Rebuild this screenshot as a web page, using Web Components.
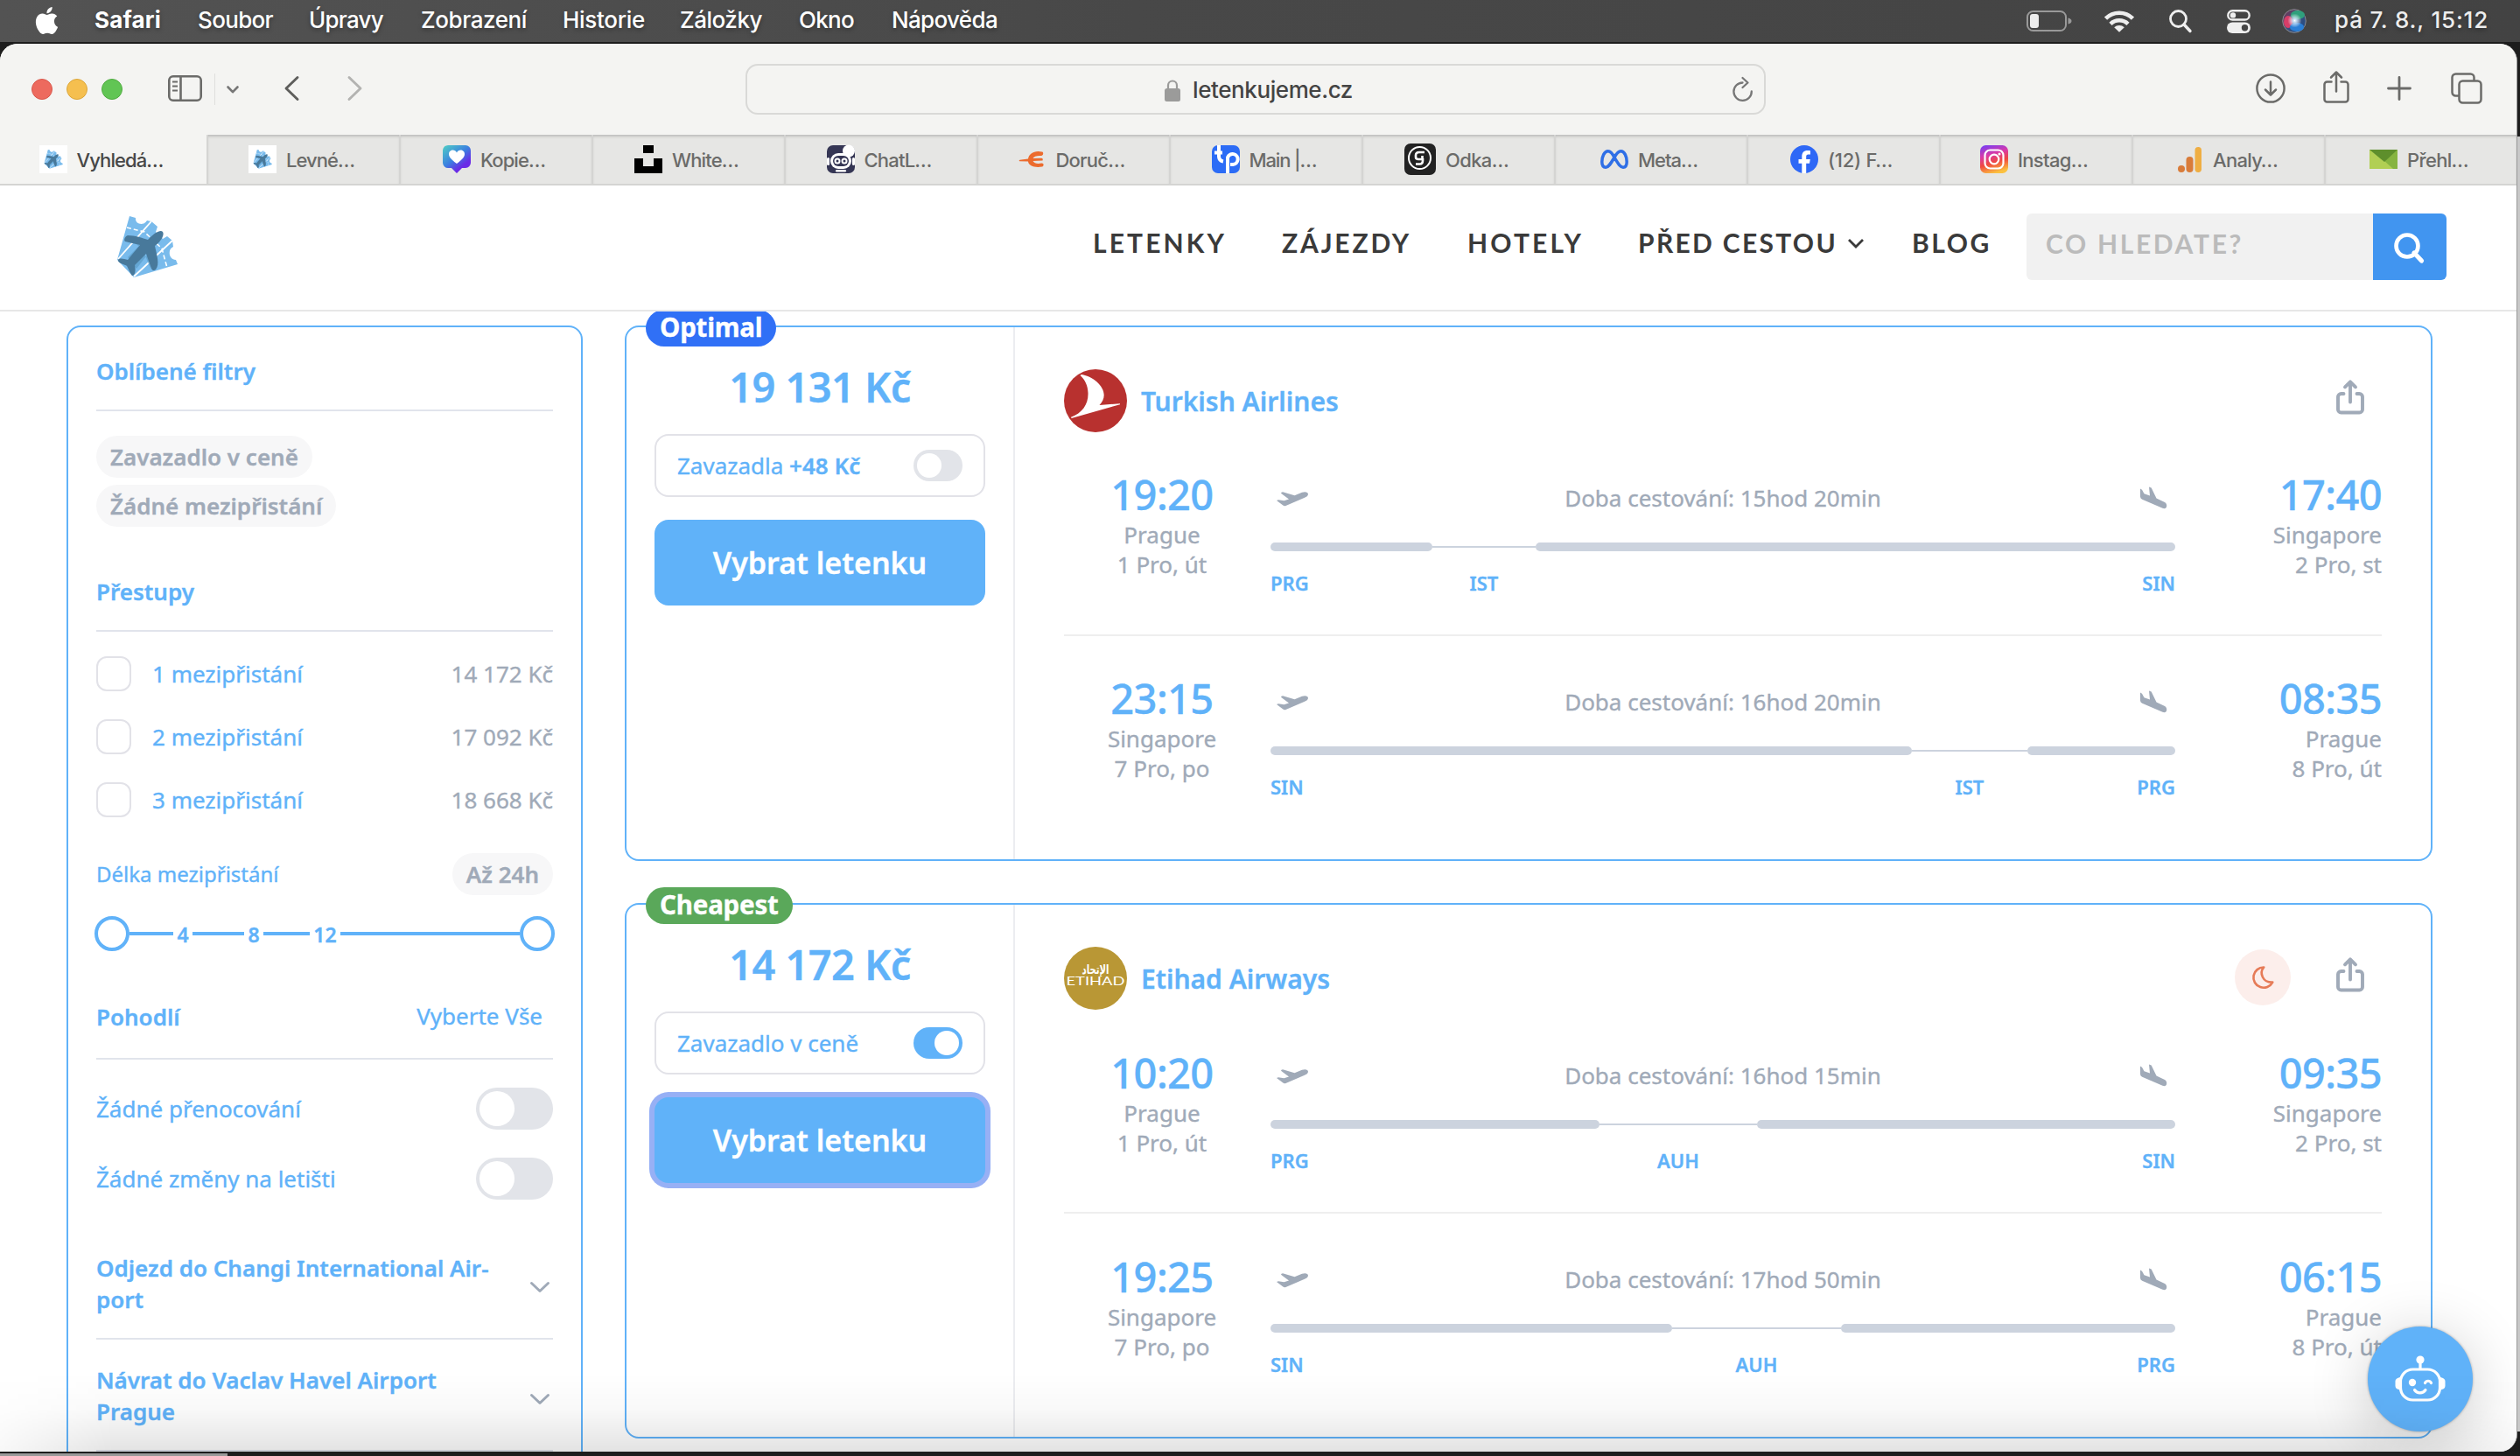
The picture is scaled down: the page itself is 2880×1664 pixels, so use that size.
<!DOCTYPE html>
<html lang="cs">
<head>
<meta charset="utf-8">
<title>letenkujeme.cz</title>
<style>
html,body{margin:0;padding:0;width:2880px;height:1664px;overflow:hidden;background:#1d1d1d}
</style>
</head>
<body>
<desktop-shell></desktop-shell>
<script>
const css = s => `<style>*{box-sizing:border-box}svg{display:block;flex:none;overflow:visible}${s}</style>`;
function define(name, render) {
  customElements.define(name, class extends HTMLElement {
    connectedCallback() {
      if (this.shadowRoot) return;
      this.attachShadow({ mode: 'open' });
      this.shadowRoot.innerHTML = render(this);
    }
  });
}
const at = (el, n, d = '') => el.getAttribute(n) ?? d;

/* One line of text tracked out to a given width */
customElements.define('fit-text', class extends HTMLElement {
  connectedCallback() {
    if (this.shadowRoot) return;
    this.attachShadow({ mode: 'open' }).innerHTML =
      css(':host{display:inline-block;white-space:pre;flex:none}span{display:inline-block}') + '<span><slot></slot></span>';
    const span = this.shadowRoot.querySelector('span');
    const w = +this.getAttribute('w');
    const natural = span.getBoundingClientRect().width;
    if (w && natural) {
      this.style.letterSpacing = ((w - natural) / this.textContent.length).toFixed(3) + 'px';
      this.style.width = w + 'px';
    }
  }
});

/* ---------- icons ---------- */
const LOGO = `<path fill="#79bbec" d="M14 0L21 2C20 9 30 12 34 5L39 6L46 12L44 18L52 26L57 23L63 28L64 35C57 38 59 50 67 50L69 55L19 70L0 50Z"/>
<g stroke="#fff" fill="none"><path stroke-width="1.8" d="M39 6L1 49M63 28L19 69"/><path stroke-width="1.6" stroke-dasharray="5 3" d="M11 13L31 18L51 37L57 59"/></g>
<path fill="#5b9cc9" d="M8 28L26 33L12 47L22 60L36 42L38 60L30 40L20 30Z" opacity=".7"/>
<path fill="#48799b" d="M52 18C54 21 51 28 43 34C45 44 49 55 44 61C42 63 40 62 39 60L33 43L20 56C21 61 21 66 18 68C16 69 12 58 11 57C9 55 0 54 1 50C3 47 8 49 12 50L26 33L9 29C7 27 9 23 12 22C20 22 29 25 35 27C43 18 50 15 52 18Z"/>`;
const ICONS = {
  apple: ['0 0 24 24', '<path fill="#fff" d="M12.152 6.896c-.948 0-2.415-1.078-3.96-1.04-2.04.027-3.91 1.183-4.961 3.014-2.117 3.675-.546 9.103 1.519 12.09 1.013 1.454 2.208 3.09 3.792 3.039 1.52-.065 2.09-.987 3.935-.987 1.831 0 2.35.987 3.96.948 1.637-.026 2.676-1.48 3.676-2.948 1.156-1.688 1.636-3.325 1.662-3.415-.039-.013-3.182-1.221-3.22-4.857-.026-3.04 2.48-4.494 2.597-4.559-1.429-2.09-3.623-2.324-4.39-2.376-2-.156-3.675 1.09-4.61 1.09zM15.53 3.83c.843-1.012 1.4-2.427 1.245-3.83-1.207.052-2.662.805-3.532 1.818-.78.896-1.454 2.338-1.273 3.714 1.338.104 2.715-.688 3.559-1.701"/>'],
  battery: ['0 0 52 24', '<rect x="1" y="1" width="44" height="22" rx="6.5" fill="none" stroke="#999" stroke-width="2"/><rect x="4" y="4" width="10" height="16" rx="3" fill="#ededed"/><path fill="#999" d="M47.500 8.500q4 1 4 3.500t-4 3.500z"/>'],
  wifi: ['0 0 34 25', '<g fill="none" stroke="#eee" stroke-width="4.600"><path d="M1.500 9.200a22 22 0 0 1 31 0"/><path d="M7 15.300a14.500 14.500 0 0 1 20 0"/></g><path fill="#eee" d="M17 24.800L11.200 19.300a8.500 8.500 0 0 1 11.600 0z"/>'],
  spotlight: ['0 0 26 26', '<circle cx="10.500" cy="10.500" r="9" fill="none" stroke="#eee" stroke-width="2.800"/><path d="M17 17l7 7.500" stroke="#eee" stroke-width="3.400" stroke-linecap="round"/>'],
  control: ['0 0 27 27', '<rect x="1.300" y="1.300" width="24.400" height="10.200" rx="5.100" fill="none" stroke="#eee" stroke-width="2.400"/><circle cx="7" cy="6.400" r="3.200" fill="#eee"/><rect y="14.500" width="27" height="12.500" rx="6.200" fill="#eee"/><circle cx="20.500" cy="20.700" r="3.700" fill="#444"/>'],
  siri: ['0 0 28 28', '<defs><radialGradient id="s"><stop offset="0" stop-color="#fff"/><stop offset=".25" stop-color="#cfeaff" stop-opacity=".9"/><stop offset="1" stop-color="#fff" stop-opacity="0"/></radialGradient><linearGradient id="t" x1="0" y1="0" x2="1" y2="1"><stop offset="0" stop-color="#7b3350"/><stop offset=".5" stop-color="#3a4f7b"/><stop offset="1" stop-color="#1b4c8a"/></linearGradient></defs><circle cx="14" cy="14" r="13.300" fill="url(#t)" stroke="#8b8b90" stroke-width="1"/><ellipse cx="18" cy="7" rx="8" ry="5" fill="#2fa07c"/><ellipse cx="7" cy="15" rx="5" ry="7" fill="#d63e68"/><ellipse cx="17" cy="21" rx="8" ry="5" fill="#2a7fd6"/><circle cx="14.500" cy="13.500" r="8" fill="url(#s)"/>'],
  sidebar: ['0 0 39 30', '<g fill="none" stroke="#6b6b69" stroke-width="2.600"><rect x="1.300" y="1.300" width="36.400" height="27.400" rx="4.500"/><path d="M14.500 1v28"/><path stroke-width="2" d="M5 7.500h6M5 12.500h6M5 17.500h6"/></g>'],
  minichev: ['0 0 14 9', '<path d="M1.500 1.500L7 7.200l5.500-5.700" fill="none" stroke="#777" stroke-width="2.600" stroke-linecap="round" stroke-linejoin="round"/>'],
  back: ['0 0 17 28', '<path d="M15 1.500L2 14l13 12.500" fill="none" stroke="#5e5e5c" stroke-width="2.900" stroke-linecap="round" stroke-linejoin="round"/>'],
  fwd: ['0 0 17 28', '<path d="M2 1.500L15 14L2 26.500" fill="none" stroke="#b3b3b1" stroke-width="2.900" stroke-linecap="round" stroke-linejoin="round"/>'],
  lock: ['0 0 18 25', '<rect y="10" width="18" height="15" rx="2.500" fill="#9b9b9a"/><path d="M4 11V6.500a5 5 0 0 1 10 0V11" fill="none" stroke="#9b9b9a" stroke-width="2.200"/>'],
  reload: ['0 0 24 28', '<path d="M11.500 6.500A10.200 10.200 0 1 0 21.800 16.500" fill="none" stroke="#777" stroke-width="2.300" stroke-linecap="round"/><path d="M11.500 1l6 5.500l-6 5.500" fill="none" stroke="#777" stroke-width="2.300" stroke-linecap="round" stroke-linejoin="round"/>'],
  download: ['0 0 34 34', '<g fill="none" stroke="#6b6b69" stroke-width="2.500" stroke-linecap="round" stroke-linejoin="round"><circle cx="17" cy="17" r="15.600"/><path d="M17 9.500v14.500M11 18.500l6 6l6-6"/></g>'],
  sshare: ['0 0 30 37', '<g fill="none" stroke="#6b6b69" stroke-width="2.500" stroke-linecap="round" stroke-linejoin="round"><path d="M9.500 12.500H4.500a3 3 0 0 0-3 3V32.500a3 3 0 0 0 3 3h21a3 3 0 0 0 3-3V15.500a3 3 0 0 0-3-3H20.500"/><path d="M15 23.500V2M9 7.500L15 1.500l6 6"/></g>'],
  plus: ['0 0 28 28', '<path d="M14 1.500v25M1.500 14h25" stroke="#6b6b69" stroke-width="2.800" stroke-linecap="round"/>'],
  tabs: ['0 0 36 36', '<g fill="none" stroke="#6b6b69" stroke-width="2.500"><rect x="9.500" y="9.500" width="25" height="25" rx="4"/><path d="M9 26.500H5.500a4 4 0 0 1-4-4V5.500a4 4 0 0 1 4-4h17a4 4 0 0 1 4 4V9"/></g>'],
  brand: ['0 0 70 70', LOGO],
  letenky: ['0 0 32 32', `<rect width="32" height="32" fill="#fff"/><g transform="translate(5.500 5) scale(.31)">${LOGO}</g>`],
  kopie: ['0 0 32 32', '<defs><linearGradient id="k" x1="0" y1="0" x2=".8" y2="1"><stop offset="0" stop-color="#4fd0c4"/><stop offset=".5" stop-color="#3b7fe0"/><stop offset=".8" stop-color="#6a2be6"/></linearGradient></defs><path fill="url(#k)" d="M6 0H26a6 6 0 0 1 6 6V20a6 6 0 0 1-6 6H22L16 32L10 26H6a6 6 0 0 1-6-6V6A6 6 0 0 1 6 0z"/><path fill="#fff" d="M16 21C9 16 7 13 7 10c0-4.500 6.500-6.500 9-1.500c2.500-5 9-3 9 1.500c0 3-2 6-9 11z"/>'],
  unsplash: ['0 0 32 32', '<path d="M10 0h12v9H10zM22 15h10v17H0V15h10v9h12z"/>'],
  chat: ['0 0 32 32', '<rect width="32" height="32" rx="7" fill="#353654"/><circle cx="25" cy="6.500" r="7" fill="#fff"/><rect x="4" y="9" width="24" height="18" rx="9" fill="#fff"/><rect x="0" y="14" width="3" height="9" rx="1.500" fill="#fff"/><rect x="29" y="14" width="3" height="9" rx="1.500" fill="#fff"/><rect x="7" y="12" width="18" height="12" rx="6" fill="#353654"/><g fill="none" stroke="#fff" stroke-width="2"><circle cx="12" cy="18" r="2.500"/><circle cx="20" cy="18" r="2.500"/></g><rect x="10" y="28" width="12" height="2.500" rx="1.200" fill="#fff"/>'],
  doruc: ['0 0 32 32', '<path fill="#ec6b2d" d="M27 7.500C29 8 28.500 12 26 12C21.500 11.500 17.500 12.500 16.500 15L26 14.700Q28.500 15 27.500 17.500L16.500 18C18 21 22 21.500 26.500 20.500C29.500 20.500 29 24 27 24.500C18.500 26 11.500 23.500 11 18.500L1 18.300Q0 17.500 1.500 16.800L11 15.500C12 9.500 18 5.500 27 7.500Z"/>'],
  tp: ['0 0 32 32', '<rect width="32" height="32" rx="7" fill="#2c6cf6"/><g fill="none" stroke="#fff" stroke-width="4"><path d="M8 0V13a6 6 0 0 0 5 5.500M3 8.500h9"/><path d="M18 32V14a6 6 0 1 1 6 8h-3"/></g>'],
  odka: ['0 0 36 36', '<rect width="36" height="36" rx="7" fill="#222"/><circle cx="17.500" cy="16.500" r="12.500" fill="none" stroke="#fff" stroke-width="2"/><path d="M23 10H17q-4 0-4 3.500v2q0 2.500 3 2.500h5v1.500q0 4-3.500 4h-4.500M20.500 14v4" fill="none" stroke="#fff" stroke-width="2.600"/>'],
  meta: ['0 0 32 22', '<path d="M16 9C13.500 4 11.500 1.800 8.800 1.800C4.500 1.800 1.800 8 1.800 14c0 3.800 1.700 6.200 4.400 6.200c3 0 5-3.200 9.800-11.200c2.600-4.800 4.700-7.200 7.400-7.200c4.200 0 6.800 6.200 6.800 12.200c0 3.800-1.600 6.200-4.200 6.200c-3.200 0-5-3.200-10-11.200z" fill="none" stroke="#2f6fe6" stroke-width="3.500"/>'],
  fb: ['0 0 32 32', '<circle cx="16" cy="16" r="16" fill="#2e68f6"/><path fill="#fff" d="M13.300 32V20.800H9.500V16h3.800v-3.300C13.300 8.500 15.500 6 19.800 6c1.500 0 2.700.2 3.200.3v4.200h-2.300c-1.900 0-2.500 1-2.500 2.600V16h4.600l-.8 4.800h-3.800V32z"/>'],
  insta: ['0 0 32 32', '<defs><linearGradient id="g" x1=".2" y1="0" x2=".5" y2="1"><stop offset="0" stop-color="#7b3df0"/><stop offset=".35" stop-color="#d93aa8"/><stop offset=".65" stop-color="#f0483f"/><stop offset="1" stop-color="#fbc13f"/></linearGradient></defs><rect width="32" height="32" rx="6.500" fill="url(#g)"/><g fill="none" stroke="#fff" stroke-width="2.200"><rect x="5.500" y="5.500" width="21" height="21" rx="6"/><circle cx="16" cy="16" r="5.300"/></g><circle cx="22" cy="10" r="1.500" fill="#fff"/>'],
  ga: ['0 0 32 32', '<circle cx="7" cy="27" r="4" fill="#d97c3a"/><rect x="12.500" y="13" width="8" height="18" rx="4" fill="#d97c3a"/><rect x="22.500" y="2" width="7.500" height="29" rx="3.700" fill="#efae43"/>'],
  mail: ['0 0 32 22', '<path fill="#b1cf54" d="M0 0H32V22H0z"/><path fill="#86b440" d="M32 0V22H27L16 12z"/><path fill="#5e8f2c" d="M0 0H32L17 14z"/>'],
  navchev: ['0 0 20 12', '<path d="M2 2l8 8l8-8" fill="none" stroke="#3a3a3a" stroke-width="2.800"/>'],
  search: ['0 0 34 34', '<circle cx="15" cy="15" r="12.500" fill="none" stroke="#fff" stroke-width="4.600"/><path d="M23 23l8.500 9" stroke="#fff" stroke-width="5.200" stroke-linecap="round"/>'],
  chev: ['0 0 22 12', '<path d="M1.500 1.500L11 10.500l9.500-9" fill="none" stroke="#a0aab8" stroke-width="3" stroke-linecap="round" stroke-linejoin="round"/>'],
  takeoff: ['0 0 36 17', '<path fill="#a0aab8" d="M0 10L2 9.300L8.500 10.300L14 8.500L5 1.800Q5 .5 7 .3L20.500 4.300L29 .8C33-.6 36 .6 36 2.800C36 4.800 34 6 32 6.800L10.500 16Q8.500 16.600 7.300 15.500Z"/>'],
  landing: ['0 0 31 26', '<path fill="#a0aab8" d="M0 2.500L2 3.800L4.500 8.200L11 10.500L10 .5L12.700 1.500L18.500 13.500L28 18Q31 20 30 23.500Q29 26 25.500 24.800L2.200 14.800Q0 13.800 0 11.500Z"/>'],
  share: ['0 0 32 40', '<g fill="none" stroke="#a0aab8" stroke-width="3.900" stroke-linecap="round" stroke-linejoin="round"><path d="M8.500 16H5.500a3.500 3.500 0 0 0-3.500 3.500V34a3.500 3.500 0 0 0 3.500 3.500h21A3.500 3.500 0 0 0 30 34V19.500A3.500 3.500 0 0 0 26.500 16H23.500"/><path d="M16 25.500V2.500M10 8.300L16 2.300l6 6"/></g>'],
  moon: ['0 0 24 24', '<path d="M21 16.500A9.300 9.300 0 1 1 13 2.800C8.500 8 12 17 21 16.500z" fill="none" stroke="#e67b57" stroke-width="2.100" stroke-linejoin="round"/>'],
  robot: ['0 0 120 120', '<g fill="none" stroke="#fff" stroke-width="3.200" stroke-linecap="round"><rect x="37.500" y="49" width="45" height="35" rx="14"/><path d="M60 48v-8"/><path d="M65.500 64.500c1.500-3 5.500-3 7 0M53.500 72.500c3 4.500 9.500 4.500 12.500 0"/></g><circle cx="60" cy="38" r="4.600" fill="#fff"/><circle cx="51" cy="64" r="4.200" fill="#fff"/><path fill="#fff" d="M37 58v14.500q-5.500-1-5.500-4.500v-5.500q0-3.500 5.500-4.500zM83 58v14.500q5.500-1 5.500-4.500v-5.500q0-3.500-5.500-4.500z"/>'],
  turkish: ['0 0 72 72', '<circle cx="36" cy="36" r="36" fill="#b8312f"/><path fill="#fff" d="M20 6C33 8 45.700 19 45.700 29.500C45.700 34 43.500 38 40.500 41L64 39.200L64 40.200L8.500 56L8 54.800C21 50 28 40 27.500 27C27.200 18.500 24 12 18.500 7Z"/>'],
  etihad: ['0 0 72 72', '<circle cx="36" cy="36" r="36" fill="#b99735"/><text x="36" y="31" fill="#fff" font-family="DejaVu Sans,sans-serif" font-size="15" text-anchor="middle" textLength="31" lengthAdjust="spacingAndGlyphs">الإتحاد</text><text x="2.500" y="44" fill="#fff" font-family="Lato,sans-serif" font-size="13" font-weight="400" textLength="67" lengthAdjust="spacingAndGlyphs">ETIHAD</text>']
};
define('ui-icon', el => {
  const [vb, body] = ICONS[at(el, 'name')];
  const [, , w, h] = vb.split(' ');
  return css(':host{display:block;flex:none;-webkit-text-stroke:0}') + `<svg viewBox="${vb}" width="${at(el, 'w', w)}" height="${at(el, 'h', h)}">${body}</svg>`;
});

/* ---------- menu bar ---------- */
define('menu-bar', () => {
  const items = [['Soubor', 42, 86], ['Úpravy', 41, 85], ['Zobrazení', 43, 121], ['Historie', 41, 94], ['Záložky', 40, 94], ['Okno', 42, 63], ['Nápověda', 43, 121]];
  return css(`:host{display:flex;height:48px;align-items:center;justify-content:space-between;padding:0 36px 0 38px;background:linear-gradient(90deg,#535353,#484848 45%,#434343);color:#fff;font:500 26px/44px Inter,sans-serif;text-shadow:0 2px 5px rgba(0,0,0,.35)}
  div{display:flex;align-items:center;height:46px}fit-text{margin-top:-2px}.r{color:#ededed}`) +
  `<div><ui-icon name="apple" w="31" h="31" style="margin-top:-2px"></ui-icon><fit-text w="76" style="margin-left:39px;font-weight:700">Safari</fit-text>${items.map(([t, m, w]) => `<fit-text w="${w}" style="margin-left:${m}px">${t}</fit-text>`).join('')}</div>
  <div class="r"><ui-icon name="battery"></ui-icon><ui-icon name="wifi" style="margin-left:37px"></ui-icon><ui-icon name="spotlight" style="margin-left:40px"></ui-icon><ui-icon name="control" style="margin-left:40px"></ui-icon><ui-icon name="siri" style="margin-left:36px"></ui-icon><fit-text w="176" style="margin-left:32px">pá 7. 8., 15:12</fit-text></div>`;
});

/* ---------- browser chrome ---------- */
define('tool-bar', () => css(`:host{display:flex;height:104px;align-items:center;background:#f4f4f2;padding-left:36px}
  i{width:24px;height:24px;border-radius:50%;margin-right:16px;flex:none}
  .sep{width:1px;height:36px;background:#dfdfdd;margin:0 13px 0 14px}
  .url{width:1166px;height:58px;margin-left:438px;border:2px solid #d9d9d7;border-radius:14px;display:flex;align-items:center;color:#444;font:500 26px/54px Inter,sans-serif}`) +
  `<i style="background:#ed6a5e;border:1px solid #d9584c"></i><i style="background:#f5bf4f;border:1px solid #dca73b"></i><i style="background:#61c554;border:1px solid #51ac42"></i>
  <ui-icon name="sidebar" style="margin-left:36px;margin-top:-2px"></ui-icon><span class="sep"></span><ui-icon name="minichev"></ui-icon>
  <ui-icon name="back" style="margin-left:52px;margin-top:-2px"></ui-icon><ui-icon name="fwd" style="margin-left:55px;margin-top:-2px"></ui-icon>
  <div class="url"><ui-icon name="lock" style="margin-left:477px;margin-top:3px"></ui-icon><fit-text w="183" style="margin-left:14px;margin-top:2px">letenkujeme.cz</fit-text><ui-icon name="reload" style="margin-left:434px"></ui-icon></div>
  <ui-icon name="download" style="margin-left:560px;margin-top:-2px"></ui-icon><ui-icon name="sshare" style="margin-left:43px;margin-top:-5px"></ui-icon><ui-icon name="plus" style="margin-left:43px;margin-top:-3px"></ui-icon><ui-icon name="tabs" style="margin-left:45px;margin-top:-3px"></ui-icon>`);

define('browser-tab', el => css(`:host{display:flex;align-items:center;justify-content:center;width:220px;flex:none;height:58px;gap:11px;padding-right:5px;background:#e6e6e4;border-left:2px solid #d4d4d2;border-bottom:2px solid #d4d4d2;box-shadow:inset 0 3px 3px -1px #bdbdbb;color:#6b6b69;font:500 22px/56px Inter,sans-serif}
  :host([active]){background:#f4f4f2;width:236px;border-left:0;color:#474747;box-shadow:none}
  fit-text{margin-top:2px}`) +
  `<ui-icon name="${at(el, 'icon')}"></ui-icon><fit-text w="${at(el, 'w')}">${at(el, 'label')}</fit-text>`);

define('tab-strip', () => {
  const tabs = [['letenky', 'Levné…', 78], ['kopie', 'Kopie…', 74], ['unsplash', 'White…', 76], ['chat', 'ChatL…', 77], ['doruc', 'Doruč…', 79], ['tp', 'Main |…', 77], ['odka', 'Odka…', 72], ['meta', 'Meta…', 68], ['fb', '(12) F…', 74], ['insta', 'Instag…', 80], ['ga', 'Analy…', 74], ['mail', 'Přehl…', 70]];
  return css(':host{display:flex;height:58px;overflow:hidden}') + `<browser-tab active icon="letenky" label="Vyhledá…" w="99"></browser-tab>` +
    tabs.map(([i, l, w]) => `<browser-tab icon="${i}" label="${l}" w="${w}"></browser-tab>`).join('');
});

/* ---------- site header ---------- */
define('site-header', () => css(`:host{display:flex;height:144px;align-items:flex-start;border-bottom:2px solid #e7e7e7;background:#fff;padding:32px 80px 0 134px;position:relative;z-index:2;font:700 30px/66px Lato,sans-serif;color:#3a3a3a;-webkit-text-stroke:0}
  nav{display:flex;margin-left:auto;align-items:center;height:66px}
  .q{width:396px;height:76px;background:#f1f1f1;border-radius:6px 0 0 6px;color:#bbb;padding-left:22px;margin-left:40px;line-height:68px}
  .b{width:84px;height:76px;background:#4195f0;border-radius:0 6px 6px 0;display:flex;align-items:center;justify-content:center}`) +
  `<ui-icon name="brand" style="margin-top:3px"></ui-icon>
  <nav><fit-text w="153">LETENKY</fit-text><fit-text w="148" style="margin-left:63px">ZÁJEZDY</fit-text><fit-text w="133" style="margin-left:64px">HOTELY</fit-text><fit-text w="228" style="margin-left:62px">PŘED CESTOU</fit-text><ui-icon name="navchev" style="margin-left:11px;margin-top:2px"></ui-icon><fit-text w="91" style="margin-left:54px">BLOG</fit-text></nav>
  <div class="q"><fit-text w="226">CO HLEDATE?</fit-text></div><div class="b"><ui-icon name="search" style="margin:2px 0 0 -2px"></ui-icon></div>`);

/* ---------- filters ---------- */
define('toggle-switch', el => {
  const big = el.hasAttribute('big');
  return css(`:host{display:flex;flex:none;width:${big ? 88 : 56}px;height:${big ? 48 : 36}px;padding:4px;border-radius:24px;background:#e2e4e9}
  :host([on]){background:#60b2f9;justify-content:flex-end}i{height:100%;aspect-ratio:1;border-radius:50%;background:#fff}`) + '<i></i>';
});
define('filter-title', () => css(`:host{display:flex;justify-content:space-between;align-items:center;font-weight:600;font-size:26px;line-height:36px;padding-bottom:26px;border-bottom:2px solid #e1e4ec}`) + '<slot></slot>');
define('filter-chip', () => css(':host{display:block;width:max-content;height:48px;line-height:48px;border-radius:24px;padding:0 16px;background:#f7f7f8;color:#a0aab8;font-weight:600;font-size:26px}') + '<slot></slot>');
define('stop-option', el => css(`:host{display:flex;align-items:center;height:40px}i{width:40px;height:40px;border:2px solid #e2e2e8;border-radius:12px;margin-right:24px}span{margin-left:auto;color:#a0aab8}`) +
  `<i></i><slot></slot><span>${at(el, 'price')}</span>`);
define('range-slider', () => css(`:host{display:flex;align-items:center;height:40px;margin:0 -2px;font-weight:600;font-size:23px}
  i{width:40px;height:40px;border:4px solid #60b2f9;border-radius:50%;flex:none}u{height:4px;background:#60b2f9;flex:none}b{text-align:center;flex:none;font-weight:600;margin-top:1px}`) +
  `<i></i><u style="width:50px"></u><b style="width:22px">4</b><u style="width:59px"></u><b style="width:22px">8</b><u style="width:53px"></u><b style="width:35px">12</b><u style="flex:1"></u><i></i>`);
define('filter-panel', () => css(`:host{display:block;width:590px;flex:none;border:2px solid #60b2f9;border-radius:16px 16px 0 0;padding:32px 32px 0;height:1310px;color:#60b2f9;font-size:26px;line-height:36px}
  .row{display:flex;justify-content:space-between;align-items:center}.row>span{white-space:nowrap}
  filter-chip+filter-chip{margin-top:8px}stop-option+stop-option{margin-top:32px}`) +
  `<filter-title>Oblíbené filtry</filter-title>
  <filter-chip style="margin-top:28px">Zavazadlo v ceně</filter-chip><filter-chip>Žádné mezipřistání</filter-chip>
  <filter-title style="margin:56px 0 28px">Přestupy</filter-title>
  <stop-option price="14 172 Kč">1 mezipřistání</stop-option><stop-option price="17 092 Kč">2 mezipřistání</stop-option><stop-option price="18 668 Kč">3 mezipřistání</stop-option>
  <div class="row" style="margin:41px 0 24px"><span style="font-size:24px">Délka mezipřistání</span><filter-chip>Až 24h</filter-chip></div>
  <range-slider></range-slider>
  <filter-title style="margin-top:57px;padding-bottom:29px">Pohodlí<span style="font-weight:400;margin:-3px 12px 0 0">Vyberte Vše</span></filter-title>
  <div class="row" style="margin-top:32px"><span>Žádné přenocování</span><toggle-switch big></toggle-switch></div>
  <div class="row" style="margin-top:32px"><span>Žádné změny na letišti</span><toggle-switch big></toggle-switch></div>
  <filter-title style="margin-top:60px"><span>Odjezd do Changi International Air-<br>port</span><ui-icon name="chev" style="margin:7px 4px 0 0"></ui-icon></filter-title>
  <filter-title style="margin-top:28px"><span>Návrat do Vaclav Havel Airport<br>Prague</span><ui-icon name="chev" style="margin:7px 4px 0 0"></ui-icon></filter-title>`);

/* ---------- results ---------- */
define('flight-leg', el => {
  const [t1, c1, d1, t2, c2, d2, dur, a, b, c, s1, s2] = at(el, 'data').split('|');
  return css(`:host{display:grid;grid-template-columns:224px 1034px 1fr;column-gap:0;height:231px;padding-top:42px;color:#a0aab8;font-size:26px;line-height:34px}
  time{display:block;font-size:47px;line-height:58px;letter-spacing:-.6px;font-weight:500;color:#60b2f9}
  .o{text-align:center;padding-top:var(--dy,0)}.d{text-align:right;padding-top:var(--dy,0)}.m{margin-left:12px;width:1034px}
  .top{display:grid;grid-template-columns:1fr auto 1fr;align-items:start;height:68px;margin-top:16px}
  .segs{display:grid;grid-template-columns:${s1}px ${s2}px 1fr;align-items:center;height:10px}
  .segs i{height:10px;border-radius:5px;background:#ccd3de}.segs u{height:2px;background:#ccd3de}
  .labels{display:grid;grid-template-columns:${s1}px ${s2}px 1fr;font-size:22px;line-height:30px;font-weight:600;color:#60b2f9;margin-top:21px}`) +
  `<div class="o"><time>${t1}</time>${c1}<br>${d1}</div>
  <div class="m"><div class="top"><ui-icon name="takeoff" style="margin:10px 0 0 7px"></ui-icon><span>Doba cestování: ${dur}</span><ui-icon name="landing" style="margin:4px 9px 0 auto"></ui-icon></div>
  <div class="segs"><i></i><u></u><i></i></div><div class="labels"><span>${a}</span><span style="text-align:center">${b}</span><span style="text-align:right">${c}</span></div></div>
  <div class="d"><time>${t2}</time>${c2}<br>${d2}</div>`;
});
define('offer-card', el => css(`:host{display:flex;width:2066px;height:612px;border:2px solid #60b2f9;border-radius:16px;position:relative;color:#60b2f9}
  .badge{position:absolute;left:22px;top:-20px;height:42px;line-height:40px;border-radius:21px;padding:0 16px;color:#fff;font-weight:700;font-size:29.500px;letter-spacing:-.2px;background:${at(el, 'color')}}
  .buy{width:444px;flex:none;border-right:2px solid #ecedf0;padding:36px 32px 0}
  .price{font-size:47px;line-height:64px;letter-spacing:-.6px;font-weight:600;text-align:center}
  .bag{display:flex;align-items:center;justify-content:space-between;height:72px;margin-top:22px;border:2px solid #e2e2e8;border-radius:16px;padding:0 24px;font-size:26px}
  .btn{height:98px;line-height:98px;margin-top:26px;border-radius:16px;background:#60b2f9;color:#fff;text-align:center;font-size:34px;font-weight:600}
  :host([focus]) .btn{box-shadow:0 0 0 6px #97b0f5}
  .fly{flex:1;padding:48px 56px 0}
  .air{display:flex;height:72px;align-items:center;font-size:30px;font-weight:600}
  .moon{width:64px;height:64px;border-radius:50%;background:#fceeeb;display:flex;align-items:center;justify-content:center;margin:-2px 52px 0 0}
  .line{height:2px;background:#eee}.sh{margin:-8px 20px 0 0}`) +
  `<div class="buy"><div class="price">${at(el, 'price')}</div><div class="bag"><span><slot></slot></span><toggle-switch ${el.hasAttribute('bag') ? 'on' : ''}></toggle-switch></div><div class="btn">Vybrat letenku</div></div>
  <div class="fly"><div class="air"><ui-icon name="${at(el, 'logo')}"></ui-icon><span style="margin:0 auto 0 16px">${at(el, 'airline')}</span>${el.hasAttribute('night') ? '<div class="moon"><ui-icon name="moon" w="30" h="30"></ui-icon></div>' : ''}<ui-icon class="sh" name="share"></ui-icon></div>
  <flight-leg data="${at(el, 'leg1')}"></flight-leg><div class="line"></div><flight-leg data="${at(el, 'leg2')}"></flight-leg></div>
  <div class="badge">${at(el, 'badge')}</div>`);

define('site-page', () => css(`:host{display:block;height:1447px;overflow:hidden;position:relative;background:#fff;font-family:"Noto Sans",sans-serif;-webkit-text-stroke:.35px currentColor}
  main{display:flex;gap:48px;padding:16px 0 0 76px}.list{display:flex;flex-direction:column;gap:48px}
  .fade{position:absolute;left:0;right:0;bottom:0;height:90px;background:linear-gradient(rgba(0,0,0,0),rgba(0,0,0,.025) 45%,rgba(0,0,0,.11));-webkit-mask:linear-gradient(90deg,rgba(0,0,0,.25),#000 130px,#000 2700px,rgba(0,0,0,.3));z-index:4}
  .bot{position:absolute;left:2706px;top:1304px;width:120px;height:120px;border-radius:50%;background:#60b2f9;box-shadow:0 0 3px rgba(0,0,0,.3),0 10px 70px rgba(0,0,0,.2);z-index:3}`) +
  `<site-header></site-header>
  <main><filter-panel></filter-panel><div class="list">
  <offer-card badge="Optimal" color="#3070f6" price="19 131 Kč" logo="turkish" airline="Turkish Airlines"
    leg1="19:20|Prague|1 Pro, út|17:40|Singapore|2 Pro, st|15hod 20min|PRG|IST|SIN|185|118"
    leg2="23:15|Singapore|7 Pro, po|08:35|Prague|8 Pro, út|16hod 20min|SIN|IST|PRG|733|132">Zavazadla <b style="font-weight:600">+48 Kč</b></offer-card>
  <offer-card badge="Cheapest" color="#5aa85a" price="14 172 Kč" logo="etihad" airline="Etihad Airways" bag night focus style="--dy:1px"
    leg1="10:20|Prague|1 Pro, út|09:35|Singapore|2 Pro, st|16hod 15min|PRG|AUH|SIN|376|180"
    leg2="19:25|Singapore|7 Pro, po|06:15|Prague|8 Pro, út|17hod 50min|SIN|AUH|PRG|459|193">Zavazadlo v ceně</offer-card>
  </div></main><div class="bot"><ui-icon name="robot"></ui-icon></div><div class="fade"></div>`);

define('desktop-shell', () => css(`:host{display:flex;flex-direction:column;width:2880px;height:1664px;background:linear-gradient(90deg,#999,#999) 0 1661px/260px 3px no-repeat,linear-gradient(#c8c8c8,#c8c8c8) 2870px 156px/10px 1480px no-repeat,#1d1d1d}
  .win{width:2877px;height:1609px;margin-top:2px;border-radius:20px 20px 20px 0;overflow:hidden;background:#fff;border-right:1px solid #999}`) +
  `<menu-bar></menu-bar><div class="win"><tool-bar></tool-bar><tab-strip></tab-strip><site-page></site-page></div>`);
</script>
</body>
</html>
